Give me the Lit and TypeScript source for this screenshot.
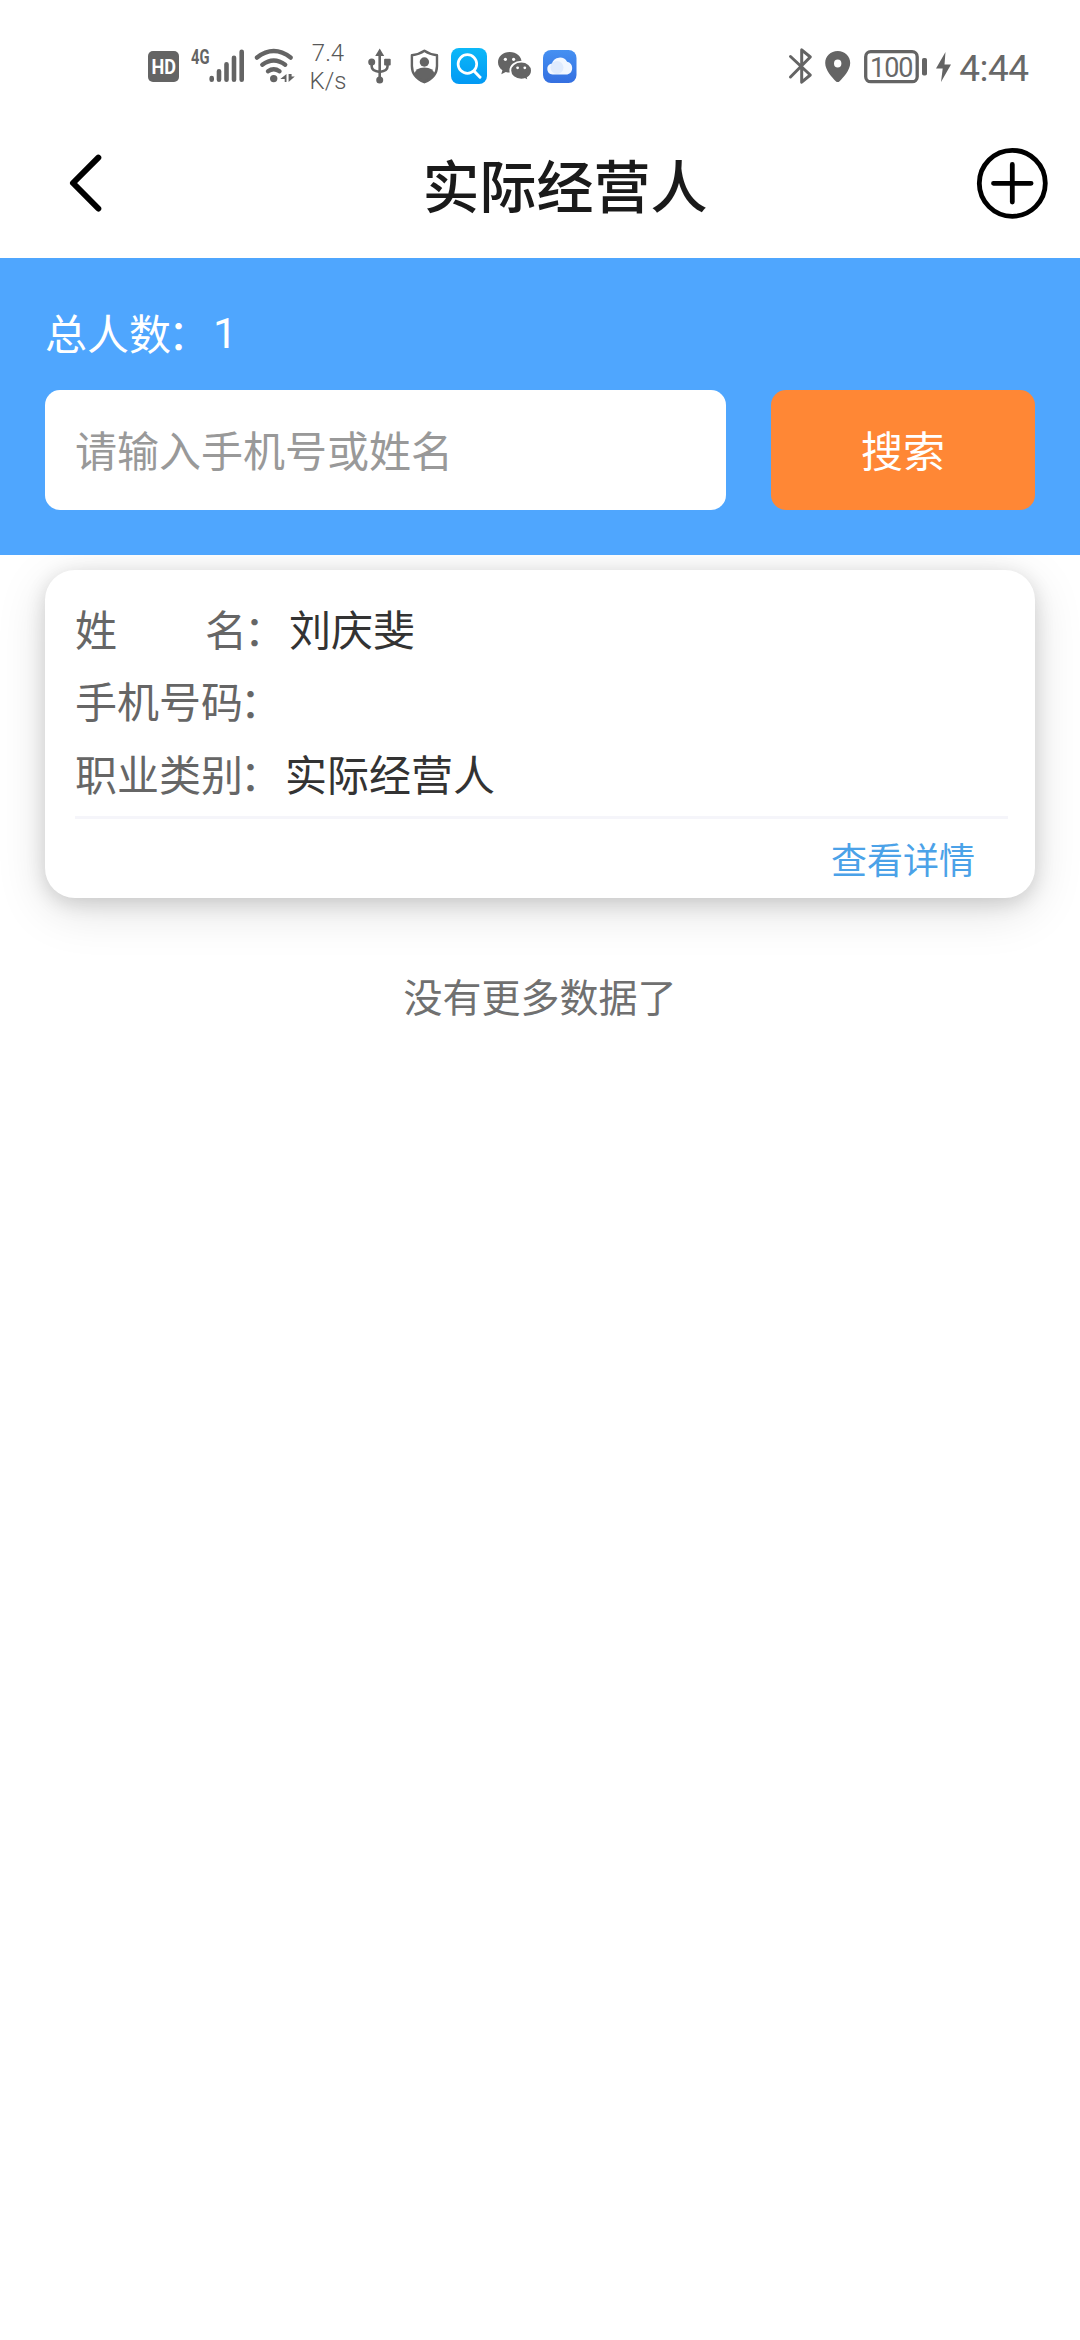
import { LitElement, html, css, svg, type SVGTemplateResult } from "lit";
import { customElement, property } from "lit/decorators.js";

interface Person {
  name: string;
  phone: string;
  job: string;
}

/** Fixed-height glyph for the status bar; every drawing is 40 units tall. */
const glyph = (width: number, body: SVGTemplateResult) => html`
  <svg width=${width} height="40" viewBox="0 0 ${width} 40" fill="none">${body}</svg>
`;

@customElement("status-bar")
export class StatusBar extends LitElement {
  static styles = css`
    :host {
      display: flex;
      align-items: flex-start;
      box-sizing: border-box;
      height: 90px;
      padding: 42px 45px 0 147px;
      color: #686868;
      font-family: Roboto, "Noto Sans", sans-serif;
    }
    .group {
      display: flex;
      align-items: center;
      height: 48px;
    }
    .right {
      margin-left: auto;
    }
    svg {
      display: block;
      flex: none;
    }
    .speed {
      box-sizing: border-box;
      width: 56px;
      padding: 2px 8px 0 0;
      text-align: center;
      font-size: 24px;
      line-height: 28px;
      font-weight: 300;
      color: #585858;
    }
    .time {
      box-sizing: border-box;
      width: 80px;
      padding: 5px 2px 0 0;
      text-align: center;
      font-size: 37px;
      line-height: 44px;
      font-weight: 400;
      letter-spacing: -0.5px;
      white-space: nowrap;
    }
    .f {
      fill: #646464;
    }
    .s {
      stroke: #646464;
      stroke-linecap: round;
      stroke-linejoin: round;
    }
    .hd {
      fill: #fff;
      font: 700 20px Roboto, sans-serif;
    }
    .net {
      fill: #646464;
      font: 700 20px Roboto, sans-serif;
    }
    .level {
      fill: #686868;
      font: 400 27px Roboto, sans-serif;
    }
  `;

  render() {
    return html`
      <div class="group">
        ${glyph(40, svg`
          <rect class="f" x="1" y="5" width="31" height="31" rx="5"/>
          <text class="hd" x="4.500" y="28" textLength="24.500" lengthAdjust="spacingAndGlyphs">HD</text>`)}
        ${glyph(63, svg`
          <text class="net" x="4" y="18" textLength="18.500" lengthAdjust="spacingAndGlyphs">4G</text>
          <path class="s" stroke-width="4.600" d="M24.700 32v1.700M32 25.300v8.400M39.500 18.300v15.400M47 11.800v21.900M54.700 5.800v27.900"/>`)}
        ${glyph(54, svg`
          <path class="s" stroke-width="4.400" d="M7 11.600Q23.700-1.400 40.600 11.600"/>
          <path class="s" stroke-width="4.400" d="M12.300 18.800Q23.700 10.400 35.200 18.800"/>
          <path class="s" stroke-width="4.400" d="M18 25.300Q23.700 21.300 29.500 25.300"/>
          <circle class="f" cx="23.700" cy="32.600" r="3.700"/>
          <path class="f" d="M36.500 28v8h-1.800v-3h-4.400zM38.600 28v8l6.200-5.600h-3.200v-2.400z"/>`)}
        <div class="speed">7.4<br />K/s</div>
        ${glyph(40, svg`
          <path class="f" d="M19.700 2.600 24.200 10h-9z"/>
          <path class="s" stroke-width="2.600" d="M19.700 8v26M11.700 17v3.600q0 4.400 8 5.400 7.800-1 7.800-5.400V17"/>
          <circle class="f" cx="11.700" cy="16" r="3.500"/>
          <rect class="f" x="24.100" y="12.800" width="6.600" height="6.600" rx="1"/>
          <circle class="f" cx="19.700" cy="34" r="3.500"/>`)}
        ${glyph(45, svg`
          <path class="f" d="M14 28.500Q15.500 21.500 24.400 21.500T35 28.500Q31 34.500 24.400 37 18 34.500 14 28.500z"/>
          <circle class="f" cx="24.400" cy="16" r="4.700"/>
          <path class="s" stroke-width="2.400" d="M24.400 4.800Q29.500 8.400 37 9.300V20q0 11.200-12.600 16.200Q11.900 31.200 11.900 20V9.300q7.400-.9 12.500-4.500z"/>`)}
        ${glyph(48, svg`
          <defs><linearGradient id="sg" x1="0" y1="0" x2="0" y2="1">
            <stop offset="0" stop-color="#0cb8f8"/><stop offset="1" stop-color="#0299f4"/></linearGradient></defs>
          <rect x="6" y="2" width="36" height="36" rx="8" fill="url(#sg)"/>
          <circle cx="22.400" cy="18" r="9.300" stroke="#fff" stroke-width="2.700"/>
          <path d="M29 25l6 6.200" stroke="#fff" stroke-width="3" stroke-linecap="round"/>`)}
        ${glyph(44, svg`
          <path class="f" d="M16.700 6C9.900 6 5 10.600 5 16.200c0 3.400 1.700 6.200 4.400 8.100L8.300 28.300l4.500-2.300c1.300.4 2.600.5 3.900.5 6.800 0 12-4.400 12-10.200S23.500 6 16.700 6z"/>
          <circle cx="12.400" cy="13.300" r="1.600" fill="#fff"/><circle cx="20.600" cy="13.300" r="1.600" fill="#fff"/>
          <path class="f" stroke="#fff" stroke-width="1.800" d="M28.300 15.600c-6.200 0-11 4-11 9s4.800 9 11 9c1.200 0 2.400-.1 3.500-.5l4 2.300-1-3.600c2.600-1.700 4.100-4.300 4.100-7.200 0-5-4.600-9-10.600-9z"/>
          <circle cx="24.600" cy="21.800" r="1.400" fill="#fff"/><circle cx="31.800" cy="21.800" r="1.400" fill="#fff"/>`)}
        ${glyph(46, svg`
          <defs><linearGradient id="cg" x1="0" y1="0" x2="0" y2="1">
            <stop offset="0" stop-color="#4590f2"/><stop offset="1" stop-color="#346fe0"/></linearGradient></defs>
          <rect x="6" y="4" width="33.500" height="33" rx="8" fill="url(#cg)"/>
          <path d="M15.500 28.500a5.600 5.600 0 0 1-.6-11.100 8.400 8.400 0 0 1 15.200-1.700 6.600 6.600 0 0 1 .2 12.800z" fill="#f2f7ff"/>
          <circle cx="20" cy="21.500" r="6.500" fill="#d3e3fb" opacity=".6"/>`)}
      </div>
      <div class="group right">
        ${glyph(34, svg`
          <path class="s" stroke-width="3" d="M7.500 10.500 27.300 29l-8.600 7.200V3.800L27.300 11 7.500 31"/>`)}
        ${glyph(40, svg`
          <path class="f" fill-rule="evenodd" d="M20.700 5C13.600 5 8.200 10.300 8.200 17c0 7.200 7 14.500 10.600 18.200q1.900 1.800 3.800 0C26.300 31.500 33.200 24.200 33.200 17c0-6.700-5.400-12-12.500-12zm0 8.400a3.700 4 0 1 1 0 8 3.700 4 0 1 1 0-8z"/>`)}
        ${glyph(73, svg`
          <rect class="s" x="8.700" y="5.700" width="51.500" height="30" rx="5" stroke-width="3.300"/>
          <text class="level" x="13" y="30.500" textLength="43.500">100</text>
          <rect class="f" x="65" y="12" width="5" height="17.500" rx="1.800"/>`)}
        ${glyph(25, svg`<path class="f" d="M15.500 6 6 22.500h6.700L11 36 21 18.500h-6.500z"/>`)}
        <div class="time">4:44</div>
      </div>
    `;
  }
}

@customElement("person-card")
export class PersonCard extends LitElement {
  @property({ attribute: false }) person!: Person;

  static styles = css`
    :host {
      display: block;
      box-sizing: border-box;
      height: 328px;
      padding: 22px 30px 0;
      border-radius: 30px;
      background: #fff;
      box-shadow: 0 12px 50px rgba(0, 0, 0, 0.13), 0 5px 20px rgba(0, 0, 0, 0.14);
    }
    .row {
      display: flex;
      height: 72.3px;
      line-height: 72.3px;
      font-size: 42px;
      color: #666;
      white-space: nowrap;
    }
    .wide {
      margin-right: 88px;
    }
    .colon {
      margin: 0 3px 0 -3px;
    }
    .value {
      color: #333;
    }
    .foot {
      display: flex;
      justify-content: flex-end;
      margin-top: 7px;
      margin-right: -3px;
      border-top: 3px solid #f5f5fa;
      padding: 10px 33px 0 0;
    }
    .link {
      font-size: 36px;
      line-height: 58px;
      color: #4ba2e8;
    }
  `;

  render() {
    const { name, phone, job } = this.person;
    return html`
      <div class="row">
        <span class="wide">姓</span><span>名</span><span class="colon">：</span>
        <span class="value">${name}</span>
      </div>
      <div class="row"><span>手机号码</span><span class="colon">：</span><span class="value">${phone}</span></div>
      <div class="row"><span>职业类别</span><span class="colon">：</span><span class="value">${job}</span></div>
      <div class="foot"><span class="link">查看详情</span></div>
    `;
  }
}

@customElement("app-root")
export class AppRoot extends LitElement {
  private people: Person[] = [{ name: "刘庆斐", phone: "", job: "实际经营人" }];

  static styles = css`
    :host {
      display: block;
      min-height: 2340px;
      background: #fff;
      font-family: "Noto Sans CJK SC", sans-serif;
    }
    .nav {
      display: grid;
      grid-template-columns: 120px 1fr 120px;
      align-items: start;
      height: 168px;
    }
    .nav svg {
      display: block;
    }
    .back {
      padding: 63px 0 0 60px;
    }
    .add {
      padding: 56px 0 0 15px;
    }
    .title {
      margin: 0;
      padding: 53px 0 0 50px;
      text-align: center;
      font-size: 57px;
      line-height: 80px;
      font-weight: 500;
      color: #1a1a1a;
    }
    .search {
      box-sizing: border-box;
      height: 297px;
      padding: 44px 45px 0;
      background: #4fa6fe;
    }
    .total {
      display: flex;
      height: 88px;
      font-size: 42px;
      line-height: 60px;
      color: #fff;
    }
    .colon {
      margin: 0 3px 0 -3px;
    }
    .count {
      font-family: Roboto, sans-serif;
      font-size: 43px;
      line-height: 63px;
    }
    .fields {
      display: flex;
      gap: 45px;
      height: 120px;
    }
    .query {
      flex: 1;
      min-width: 0;
      box-sizing: border-box;
      border: 0;
      border-radius: 15px;
      padding: 0 30px 4px;
      background: #fff;
      font: 400 42px "Noto Sans CJK SC", sans-serif;
      outline: none;
    }
    .query::placeholder {
      color: #999;
      opacity: 1;
    }
    .go {
      width: 264px;
      border: 0;
      padding: 0 0 4px;
      border-radius: 15px;
      background: #ff8735;
      color: #fff;
      font: 400 42px "Noto Sans CJK SC", sans-serif;
    }
    .list {
      overflow: hidden;
      padding: 15px 45px 0;
    }
    .end {
      padding: 68px 0 20px;
      text-align: center;
      font-size: 39px;
      line-height: 58px;
      color: #707070;
    }
  `;

  render() {
    return html`
      <status-bar></status-bar>
      <header class="nav">
        <div class="back">
          <svg width="50" height="60" viewBox="0 0 50 60" fill="none">
            <path d="M38.300 4.700 13 30l25.300 25.500" stroke="#000" stroke-width="6" stroke-linecap="round" stroke-linejoin="round"/>
          </svg>
        </div>
        <h1 class="title">实际经营人</h1>
        <div class="add">
          <svg width="76" height="76" viewBox="0 0 76 76" fill="none" stroke="#000" stroke-width="4.800" stroke-linecap="round">
            <circle cx="37.300" cy="37.300" r="33"/>
            <path d="M18.500 37.300h37.600M37.300 18.500v37.600"/>
          </svg>
        </div>
      </header>
      <section class="search">
        <div class="total">
          <span>总人数</span><span class="colon">：</span><span class="count">${this.people.length}</span>
        </div>
        <div class="fields">
          <input class="query" placeholder="请输入手机号或姓名" />
          <button class="go">搜索</button>
        </div>
      </section>
      <main class="list">
        ${this.people.map((p) => html`<person-card .person=${p}></person-card>`)}
        <div class="end">没有更多数据了</div>
      </main>
    `;
  }
}
